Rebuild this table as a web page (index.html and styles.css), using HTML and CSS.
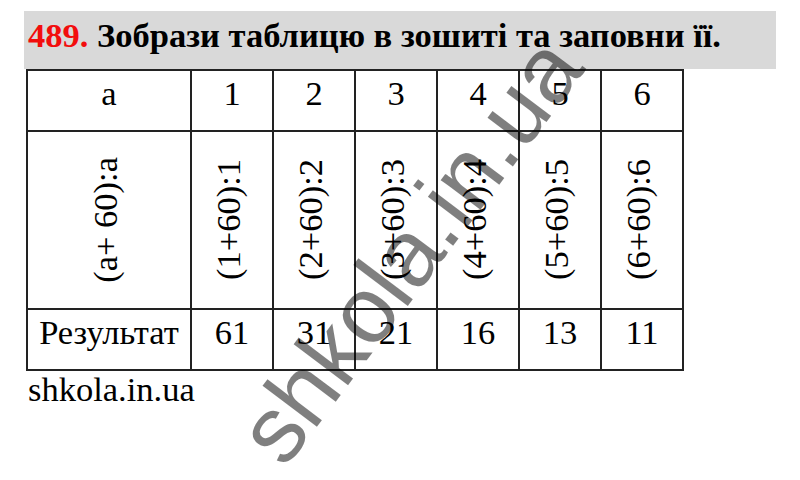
FILE: index.html
```html
<!DOCTYPE html>
<html lang="uk">
<head>
<meta charset="utf-8">
<title>489</title>
<link rel="stylesheet" href="styles.css">
</head>
<body>
<div class="page">
  <h1 class="task"><span class="num">489.</span> Зобрази таблицю в зошиті та заповни її.</h1>
  <div class="grid">
    <div class="cell">a</div>
    <div class="cell">1</div>
    <div class="cell">2</div>
    <div class="cell">3</div>
    <div class="cell">4</div>
    <div class="cell">5</div>
    <div class="cell">6</div>

    <div class="cell vcell"><span class="vt">(a+ 60):a</span></div>
    <div class="cell vcell"><span class="vt">(1+60):1</span></div>
    <div class="cell vcell"><span class="vt">(2+60):2</span></div>
    <div class="cell vcell"><span class="vt">(3+60):3</span></div>
    <div class="cell vcell"><span class="vt">(4+60):4</span></div>
    <div class="cell vcell"><span class="vt">(5+60):5</span></div>
    <div class="cell vcell"><span class="vt">(6+60):6</span></div>

    <div class="cell">Результат</div>
    <div class="cell">61</div>
    <div class="cell">31</div>
    <div class="cell">21</div>
    <div class="cell">16</div>
    <div class="cell">13</div>
    <div class="cell">11</div>
  </div>
  <div class="source">shkola.in.ua</div>
  <div class="watermark">shkola.in.ua</div>
</div>
</body>
</html>
```
FILE: styles.css
```css
html, body {
  margin: 0;
  padding: 0;
  background: #fff;
}
.page {
  position: relative;
  width: 800px;
  height: 480px;
  overflow: hidden;
  padding-top: 11px;
  box-sizing: border-box;
  font-family: "Liberation Serif", "Times New Roman", serif;
  color: #000;
}
.task {
  margin: 0 0 0 24px;
  width: 752px;
  height: 58px;
  box-sizing: border-box;
  padding: 5px 0 0 4px;
  background: #d9d9d9;
  font-size: 34.5px;
  line-height: 38px;
  font-weight: bold;
  white-space: nowrap;
}
.num {
  color: #f20d0d;
}
.grid {
  display: grid;
  grid-template-columns: 164px repeat(6, 82px);
  grid-template-rows: 61px 178px 61px;
  width: max-content;
  margin-left: 26px;
  border-left: 2px solid #222;
  border-top: 2px solid #222;
}
.cell {
  box-sizing: border-box;
  border-right: 2px solid #222;
  border-bottom: 2px solid #222;
  font-size: 34.5px;
  line-height: 36px;
  padding-top: 4px;
  text-align: center;
}
.vcell {
  padding: 0 8px 0 0;
  display: flex;
  align-items: center;
  justify-content: center;
}
.vt {
  writing-mode: vertical-rl;
  transform: rotate(180deg);
  white-space: nowrap;
  line-height: 36px;
}
.source {
  margin-left: 28px;
  font-size: 34.5px;
  line-height: 36px;
}
.watermark {
  position: absolute;
  left: 410px;
  top: 250px;
  transform: translate(-50%, -50%) rotate(-53deg);
  font-family: "Liberation Sans", Arial, sans-serif;
  font-size: 94px;
  line-height: 1;
  color: rgba(0, 0, 0, 0.5);
  white-space: nowrap;
  pointer-events: none;
}
```
